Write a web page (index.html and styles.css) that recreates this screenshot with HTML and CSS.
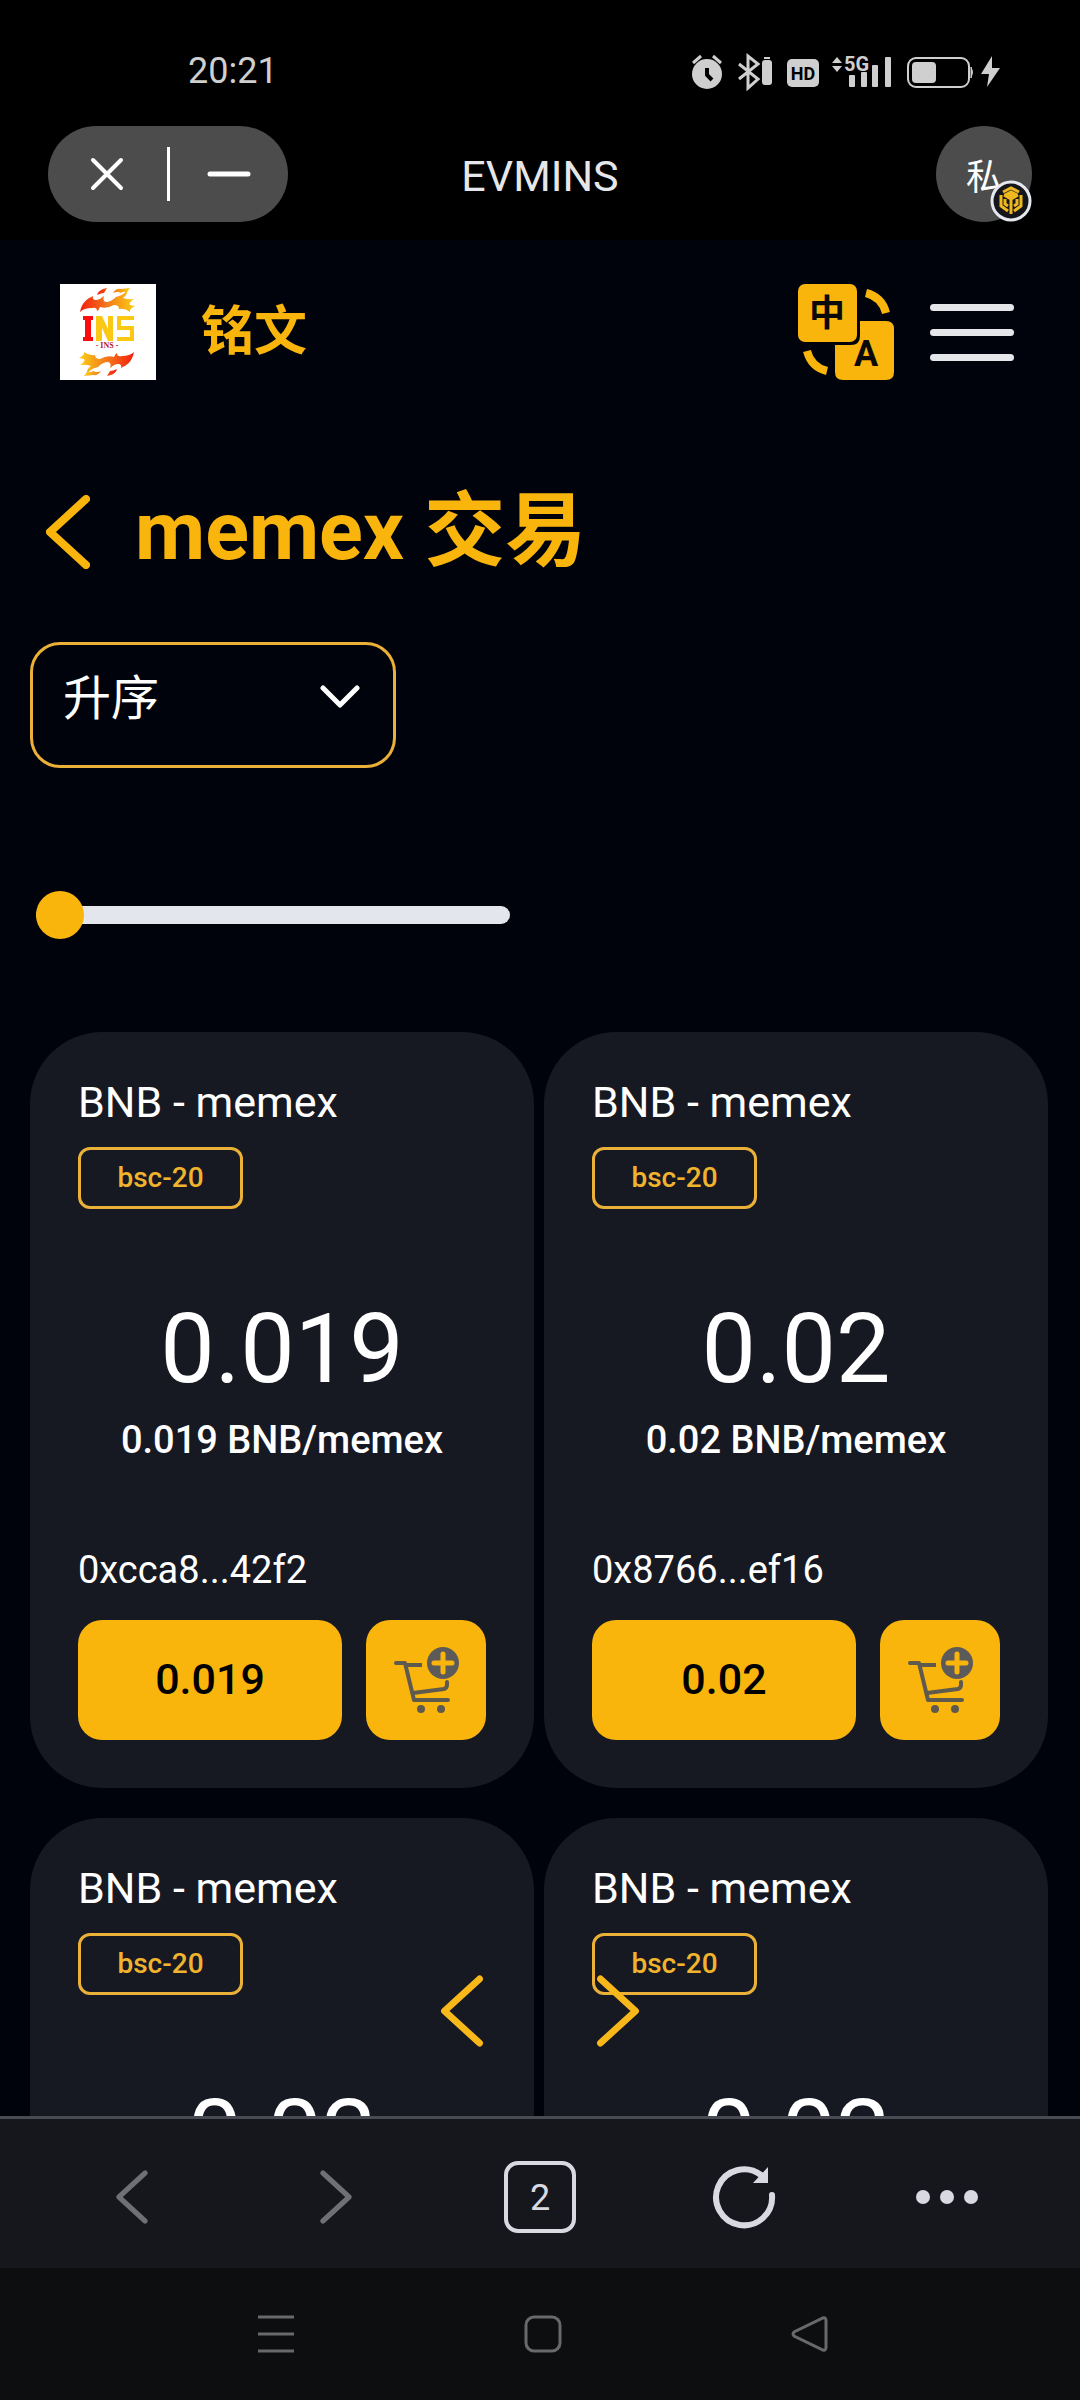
FILE: index.html
```html
<!DOCTYPE html>
<html lang="zh-CN">
<head>
<meta charset="utf-8">
<meta name="viewport" content="width=device-width, initial-scale=1">
<title>EVMINS</title>
<link rel="stylesheet" href="styles.css">
</head>
<body>
<svg class="sprite" aria-hidden="true">
  <symbol id="cart" viewBox="0 0 68 68">
    <g fill="none" stroke="#5f5a4e" stroke-width="4" stroke-linecap="round" stroke-linejoin="round">
      <path d="M4 17h9l9 37h34"/>
      <path d="M14 19h16" stroke-linecap="butt"/>
      <path d="M21 47l31-4q3-1 3-4v-3"/>
    </g>
    <circle cx="29" cy="63" r="4" fill="#5f5a4e"/>
    <circle cx="49" cy="63" r="4" fill="#5f5a4e"/>
    <circle cx="51" cy="17" r="16" fill="#5d5b5a"/>
    <path d="M51 8v18M42 17h18" fill="none" stroke="#f9b50c" stroke-width="5" stroke-linecap="round"/>
  </symbol>
  <symbol id="chev-left" viewBox="0 0 44 74">
    <path d="M40 4L4 37l36 33" fill="none" stroke="currentColor" stroke-linecap="round" stroke-linejoin="round"/>
  </symbol>
  <symbol id="chev-right" viewBox="0 0 44 74">
    <path d="M4 4l36 33L4 70" fill="none" stroke="currentColor" stroke-linecap="round" stroke-linejoin="round"/>
  </symbol>
</svg>

<div class="app">
  <div class="status">
    <time>20:21</time>
    <svg class="status-icons" width="312" height="40" viewBox="0 0 312 40" role="img" aria-label="手机状态">
      <g fill="#cfcfcf">
        <circle cx="17" cy="23" r="15"/>
        <path d="M3 12l8-7M31 12l-8-7" stroke="#cfcfcf" stroke-width="3"/>
        <path d="M17 17v7l5 5" fill="none" stroke="#000" stroke-width="4"/>
        <path d="M49 13l19 15-10 9V5l10 8-19 15" fill="none" stroke="#cfcfcf" stroke-width="3"/>
        <rect x="72" y="9" width="10" height="25" rx="3"/><rect x="74" y="6" width="6" height="2"/>
        <rect x="97" y="8" width="32" height="28" rx="5"/>
        <path d="M142 12l5-6 5 6zM142 15h10l-5 6z"/>
        <rect x="159" y="24" width="6" height="12" rx="1"/>
        <rect x="171" y="21" width="6" height="15" rx="1"/>
        <rect x="182" y="14" width="6" height="22" rx="1"/>
        <rect x="195" y="6" width="6" height="30" rx="1"/>
        <rect x="222" y="11" width="24" height="21" rx="4"/>
        <path d="M281 16q3 5 0 11z" stroke="#cfcfcf"/>
        <path d="M302 5l-11 18h8l-2 13 13-19h-8z"/>
      </g>
      <rect x="218" y="7" width="61" height="29" rx="8" fill="none" stroke="#cfcfcf" stroke-width="2"/>
      <text class="hd" x="113" y="29" text-anchor="middle">HD</text>
      <text class="fiveg" x="154" y="20">5G</text>
    </svg>
  </div>

  <div class="titlebar">
    <div class="pill">
      <button type="button" aria-label="关闭"><svg width="34" height="34" viewBox="0 0 34 34"><path d="M3 3l28 28M31 3L3 31" stroke="#fff" stroke-width="4" stroke-linecap="round"/></svg></button>
      <span class="pill-line"></span>
      <button type="button" aria-label="最小化"><svg width="44" height="6" viewBox="0 0 44 6"><path d="M3 3h38" stroke="#fff" stroke-width="5" stroke-linecap="round"/></svg></button>
    </div>
    <div class="title">EVMINS</div>
    <button type="button" class="avatar">私
      <svg class="chain" width="42" height="42" viewBox="0 0 42 42" aria-hidden="true">
        <circle cx="21" cy="21" r="19" fill="#15161c" stroke="#e6e8ef" stroke-width="3"/>
        <g fill="none" stroke="#f0b81f" stroke-width="3">
          <path d="M13 12l8-4 8 4M11 15v11l7 5M31 15v11l-7 5"/>
          <path d="M14 15l7 4 7-4M15 19v5l3 2M27 19v5l-3 2M21 18v16"/>
          <path d="M17 14l4-2 4 2-4 2z" fill="#f0b81f"/>
        </g>
      </svg>
    </button>
  </div>

  <main class="page">
    <header class="site">
      <svg class="logo" width="96" height="96" viewBox="0 0 96 96" role="img" aria-label="INS">
        <defs>
          <linearGradient id="fire"><stop offset="0" stop-color="#f51d0c"/><stop offset=".5" stop-color="#f47a1c"/><stop offset="1" stop-color="#fbcf14"/></linearGradient>
        </defs>
        <rect width="96" height="96" fill="#fff"/>
        <g id="flame" fill="url(#fire)">
          <path d="M20 28C22 18 27 15 33 12q-1 4 3 4c4 0 6-3 8-4q-2 5 2 6 5 0 10-5 9-2 11-8 1 6-4 9 5 2 11 1-6 4-4 6l5 1q-6 3-5 6-5-4-11-3 0-4-5-4-7 4-14 2-1 3-3 4 0-4-5-3-8 0-12 4z"/>
          <path d="M37 11q1-4 6-6l4-1-3 5q-3 0-7 2zM53 9q3-5 8-4l9-1-3 4q-4-1-6 1-4-2-8 0z"/>
        </g>
        <use href="#flame" transform="rotate(180 47 48)"/>
        <rect x="16" y="31" width="62" height="34" fill="#fff"/>
        <path d="M23 32h10v4h-2v17h2v4H23v-4h2V36h-2z" fill="#fb0d0d"/>
        <path d="M36 57V32h6l6 13V32h5v25h-5l-6-13v13z" fill="#fbc814"/>
        <path d="M74 34H59v10h13v11H57" fill="none" stroke="#fbc814" stroke-width="4"/>
        <text class="logo-sub" x="47" y="64" text-anchor="middle">- INS -</text>
      </svg>
      <a class="brand" href="#">铭文</a>
      <button type="button" class="lang" aria-label="切换语言">
        <svg width="96" height="96" viewBox="0 0 96 96">
          <g fill="#f9b50c">
            <path d="M62 37h26q8 0 8 8v43q0 8-8 8H45q-8 0-8-8V61h16q9 0 9-9z"/>
            <rect width="59" height="58" rx="7"/>
          </g>
          <path d="M68 9q16 4 20 20M9 67q4 16 20 20" fill="none" stroke="#f9b50c" stroke-width="8"/>
          <text class="zh" x="29" y="42" text-anchor="middle">中</text>
          <text class="en" x="68" y="82" text-anchor="middle">A</text>
        </svg>
      </button>
      <button type="button" class="menu" aria-label="菜单"><i></i><i></i><i></i></button>
    </header>

    <div class="heading">
      <a href="#" aria-label="返回"><svg class="back" width="44" height="74"><use href="#chev-left"/></svg></a>
      <h1>memex 交易</h1>
    </div>

    <div class="sort">
      <select aria-label="排序"><option>升序</option><option>降序</option></select>
      <svg width="40" height="24" viewBox="0 0 40 24" aria-hidden="true"><path d="M3 3l17 17L37 3" fill="none" stroke="#fff" stroke-width="5" stroke-linecap="round" stroke-linejoin="round"/></svg>
    </div>

    <input class="range" type="range" min="0" max="100" value="0" aria-label="价格">

    <section class="cards">
      <article class="card">
        <h2>BNB - memex</h2>
        <span class="tag">bsc-20</span>
        <div class="amount">0.019</div>
        <div class="rate">0.019 BNB/memex</div>
        <div class="addr">0xcca8...42f2</div>
        <div class="actions">
          <button type="button" class="buy">0.019</button>
          <button type="button" class="add" aria-label="加入购物车"><svg width="68" height="68"><use href="#cart"/></svg></button>
        </div>
      </article>
      <article class="card">
        <h2>BNB - memex</h2>
        <span class="tag">bsc-20</span>
        <div class="amount">0.02</div>
        <div class="rate">0.02 BNB/memex</div>
        <div class="addr">0x8766...ef16</div>
        <div class="actions">
          <button type="button" class="buy">0.02</button>
          <button type="button" class="add" aria-label="加入购物车"><svg width="68" height="68"><use href="#cart"/></svg></button>
        </div>
      </article>
      <article class="card">
        <h2>BNB - memex</h2>
        <span class="tag">bsc-20</span>
        <div class="amount">0.02</div>
      </article>
      <article class="card">
        <h2>BNB - memex</h2>
        <span class="tag">bsc-20</span>
        <div class="amount">0.02</div>
      </article>
    </section>
  </main>

  <div class="dock">
    <div class="pager">
      <button type="button" aria-label="上一页"><svg width="44" height="72"><use href="#chev-left"/></svg></button>
      <button type="button" aria-label="下一页"><svg width="44" height="72"><use href="#chev-right"/></svg></button>
    </div>
    <nav class="toolbar">
      <button type="button" class="dim" aria-label="后退"><svg width="32" height="54"><use href="#chev-left"/></svg></button>
      <button type="button" class="dim" aria-label="前进"><svg width="32" height="54"><use href="#chev-right"/></svg></button>
      <button type="button"><span class="tabs">2</span></button>
      <button type="button" aria-label="刷新"><svg width="66" height="66" viewBox="0 0 66 66"><path d="M61 31A28 28 0 1 1 50 11" fill="none" stroke="#d9dae1" stroke-width="6" stroke-linecap="round"/><path d="M57 3v16H42z" fill="#d9dae1"/></svg></button>
      <button type="button" aria-label="更多"><svg width="64" height="16" viewBox="0 0 64 16" fill="#d9dae1"><circle cx="7" cy="8" r="7"/><circle cx="31" cy="8" r="7"/><circle cx="55" cy="8" r="7"/></svg></button>
    </nav>
  </div>

  <nav class="sysnav">
    <button type="button" aria-label="最近任务"><svg width="36" height="38" viewBox="0 0 36 38"><path d="M0 2h36M0 19h36M0 36h36" stroke="#68696b" stroke-width="3"/></svg></button>
    <button type="button" aria-label="主屏幕"><svg width="38" height="38" viewBox="0 0 38 38"><rect x="2" y="2" width="34" height="34" rx="8" fill="none" stroke="#68696b" stroke-width="3"/></svg></button>
    <button type="button" aria-label="返回"><svg width="38" height="38" viewBox="0 0 38 38"><path d="M32 3q3-1 3 3v26q0 4-3 3L3 21q-2-2 0-4z" fill="none" stroke="#68696b" stroke-width="3"/></svg></button>
  </nav>
</div>
</body>
</html>
```
FILE: styles.css
```css
* { box-sizing: border-box; }

body {
  margin: 0;
  background: #000;
  color: #fff;
  font-family: Roboto, "Noto Sans CJK SC", sans-serif;
}

button {
  display: flex;
  align-items: center;
  justify-content: center;
  padding: 0;
  border: 0;
  background: none;
  color: inherit;
  font: inherit;
}

svg { display: block; flex: none; }
a { color: inherit; text-decoration: none; }
.sprite { position: absolute; width: 0; height: 0; }

.app { display: flex; flex-direction: column; height: 100vh; }

/* phone status bar */
.status {
  display: flex;
  justify-content: space-between;
  align-items: center;
  height: 92px;
  padding: 50px 78px 0 188px;
  color: #cfcfcf;
}
.status time { font-size: 36px; line-height: 44px; }
.hd { font: 700 18px Roboto, sans-serif; fill: #000; }
.fiveg { font: 700 20px Roboto, sans-serif; fill: #cfcfcf; }

/* wallet title bar */
.titlebar {
  display: grid;
  grid-template-columns: 1fr auto 1fr;
  align-items: center;
  height: 148px;
  padding: 16px 48px 0;
}
.pill {
  display: flex;
  align-items: center;
  width: 240px;
  height: 96px;
  border-radius: 48px;
  background: #4c4c4c;
}
.pill button { flex: 1; height: 96px; }
.pill-line { width: 3px; height: 54px; background: #fff; }
.title { padding-top: 4px; font-size: 43px; line-height: 48px; color: #e6e7eb; }
.avatar {
  position: relative;
  justify-self: end;
  width: 96px;
  height: 96px;
  border-radius: 48px;
  background: #4c4c4c;
  font-size: 36px;
}
.chain { position: absolute; right: 0; bottom: 0; }

/* page */
.page {
  flex: 1;
  min-height: 0;
  overflow-y: auto;
  scrollbar-width: none;
  padding: 44px 32px 0 30px;
  background: #00030c;
}
.site { display: flex; align-items: center; padding: 0 34px 0 30px; }
.logo-sub { font: 700 8px "Liberation Serif", serif; fill: #b5192b; }
.brand {
  margin-left: 45px;
  font-size: 53px;
  font-weight: 700;
  line-height: 72px;
  color: #f9b50c;
}
.lang { margin-left: auto; }
.zh { font: 700 36px "Noto Sans CJK SC", sans-serif; fill: #0b0a0a; }
.en { font: 700 36px Roboto, sans-serif; fill: #0b0a0a; }
.menu { flex-direction: column; gap: 18px; width: 84px; margin-left: 36px; }
.menu i { width: 100%; height: 7px; border-radius: 4px; background: #e4e6ea; }

.heading {
  display: flex;
  align-items: center;
  gap: 45px;
  margin-top: 92px;
  padding-left: 16px;
  color: #f9b50c;
}
.back { stroke-width: 8px; }
h1 { margin: 0; font-size: 81px; font-weight: 700; line-height: 120px; }

.sort {
  position: relative;
  width: 366px;
  margin-top: 50px;
  border: 3px solid #eab038;
  border-radius: 30px;
}
.sort select {
  appearance: none;
  display: block;
  width: 100%;
  height: 120px;
  padding: 0 30px 14px;
  border: 0;
  border-radius: 30px;
  background: none;
  color: #fff;
  font: 400 48px Roboto, "Noto Sans CJK SC", sans-serif;
}
.sort svg { position: absolute; right: 33px; top: 40px; pointer-events: none; }

.range {
  appearance: none;
  display: block;
  width: 474px;
  height: 18px;
  margin: 138px 0 0 6px;
  border-radius: 9px;
  background: #e4e6ee;
}
.range::-webkit-slider-thumb {
  appearance: none;
  width: 48px;
  height: 48px;
  border-radius: 24px;
  background: #f9b50c;
}

/* listings */
.cards {
  display: grid;
  grid-template-columns: 1fr 1fr;
  gap: 30px 10px;
  margin-top: 108px;
}
.card {
  height: 756px;
  padding: 42px 48px 48px;
  border-radius: 72px;
  background: #161822;
}
h2 { margin: 0; font-size: 43px; font-weight: 400; line-height: 56px; }
.tag {
  display: block;
  width: 165px;
  margin-top: 17px;
  border: 3px solid #eab038;
  border-radius: 12px;
  color: #f0b32e;
  font-size: 28px;
  font-weight: 500;
  line-height: 56px;
  text-align: center;
}
.amount { margin-top: 84px; font-size: 97px; line-height: 112px; text-align: center; }
.rate { margin-top: 11px; font-size: 38px; font-weight: 500; line-height: 48px; text-align: center; }
.addr { margin-top: 82px; font-size: 38px; line-height: 48px; }
.actions { display: flex; gap: 24px; margin-top: 26px; }
.actions button { height: 120px; border-radius: 24px; background: #f9b50c; }
.actions .buy { flex: 1; padding-bottom: 2px; color: #000; font-size: 43px; font-weight: 500; }
.add { width: 120px; }

/* in-app browser toolbar */
.dock { position: relative; }
.pager {
  position: absolute;
  left: 0;
  right: 0;
  bottom: 221px;
  display: flex;
  justify-content: center;
  gap: 112px;
  color: #f9b81a;
}
.pager svg { stroke-width: 7px; }
.toolbar {
  display: grid;
  grid-template-columns: repeat(5, 1fr);
  height: 152px;
  padding: 6px 30px 0;
  border-top: 3px solid #484b54;
  background: #16171c;
}
.toolbar svg { stroke-width: 7px; }
.dim { color: #6e7073; }
.tabs {
  width: 72px;
  padding-top: 3px;
  border: 4px solid #d9dae1;
  border-radius: 14px;
  color: #d9dae1;
  font-size: 36px;
  line-height: 61px;
}

.sysnav {
  display: grid;
  grid-template-columns: repeat(3, 1fr);
  height: 132px;
  padding: 0 136px 0 142px;
  background: #0d0e10;
}
```
